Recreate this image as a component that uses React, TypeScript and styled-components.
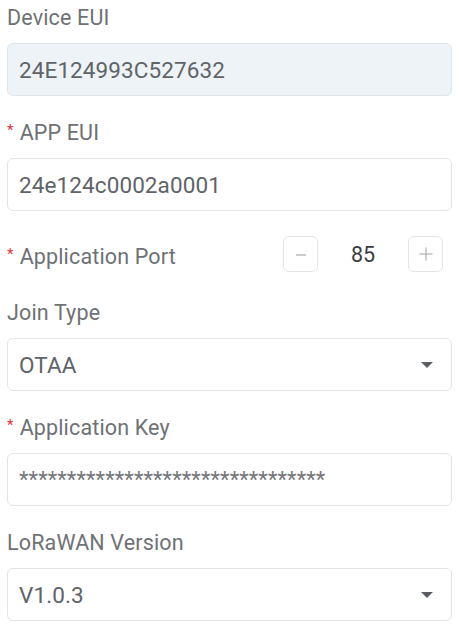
import React from 'react';
import styled, { createGlobalStyle } from 'styled-components';

const GlobalStyle = createGlobalStyle`
  body {
    margin: 0;
    background: #ffffff;
    font-family: Roboto, "Noto Sans", sans-serif;
  }
`;

const Form = styled.div`
  display: flex;
  flex-direction: column;
  gap: 23px;
  padding: 4px 7px 0;
`;

const Field = styled.div`
  display: flex;
  flex-direction: column;
  gap: 11px;
`;

const Label = styled.div<{ $offset?: number }>`
  display: flex;
  align-items: flex-start;
  height: 28px;
  line-height: 28px;
  font-size: 21.5px;
  letter-spacing: 0.15px;
  color: #6e7175;
  margin-top: ${(p) => p.$offset ?? 0}px;
`;

const Required = styled.span`
  color: #e2323a;
  font-size: 15px;
  line-height: 22px;
  margin-right: 6px;
`;

const Box = styled.div<{ $disabled?: boolean }>`
  display: flex;
  align-items: center;
  justify-content: space-between;
  height: 53px;
  box-sizing: border-box;
  padding: 0 18px 0 11px;
  border: 1px solid ${(p) => (p.$disabled ? '#dfe5ea' : '#e2e4e8')};
  border-radius: 6px;
  background: ${(p) => (p.$disabled ? '#eef3f7' : '#ffffff')};
  font-size: 22.5px;
  letter-spacing: 0.1px;
  color: #606367;
`;

const Masked = styled.span`
  font-size: 22px;
  letter-spacing: 0.1px;
  color: #73767a;
`;

const Caret = styled.span`
  width: 0;
  height: 0;
  border-left: 6.5px solid transparent;
  border-right: 6.5px solid transparent;
  border-top: 6px solid #5a5d61;
`;

const Row = styled.div`
  display: flex;
  align-items: flex-start;
  justify-content: space-between;
  padding: 2px 9px 4px 0;
`;

const Stepper = styled.div`
  display: flex;
  align-items: center;
`;

const StepButton = styled.div`
  display: flex;
  align-items: center;
  justify-content: center;
  width: 35px;
  height: 36px;
  box-sizing: border-box;
  border: 1px solid #e3e4e6;
  border-radius: 6px;
  color: #b4b6b9;
`;

const StepValue = styled.div`
  width: 90px;
  text-align: center;
  font-size: 21.5px;
  color: #3a3c3f;
`;

const FormLabel: React.FC<{ required?: boolean; offset?: number; children: React.ReactNode }> = ({
  required,
  offset,
  children,
}) => (
  <Label $offset={offset}>
    {required && <Required>*</Required>}
    <span>{children}</span>
  </Label>
);

const App: React.FC = () => {
  return (
    <>
      <GlobalStyle />
      <Form>
        <Field>
          <FormLabel>Device EUI</FormLabel>
          <Box $disabled>24E124993C527632</Box>
        </Field>
        <Field>
          <FormLabel required>APP EUI</FormLabel>
          <Box>24e124c0002a0001</Box>
        </Field>
        <Row>
          <FormLabel required offset={7}>
            Application Port
          </FormLabel>
          <Stepper>
            <StepButton>
              <svg width="12" height="12" viewBox="0 0 12 12">
                <line x1="1" y1="7" x2="11" y2="7" stroke="currentColor" strokeWidth="1.4" />
              </svg>
            </StepButton>
            <StepValue>85</StepValue>
            <StepButton>
              <svg width="14" height="14" viewBox="0 0 14 14">
                <line x1="0.5" y1="7" x2="13.5" y2="7" stroke="currentColor" strokeWidth="1.3" />
                <line x1="7" y1="0.5" x2="7" y2="13.5" stroke="currentColor" strokeWidth="1.3" />
              </svg>
            </StepButton>
          </Stepper>
        </Row>
        <Field>
          <FormLabel>Join Type</FormLabel>
          <Box>
            OTAA
            <Caret />
          </Box>
        </Field>
        <Field>
          <FormLabel required>Application Key</FormLabel>
          <Box>
            <Masked>********************************</Masked>
          </Box>
        </Field>
        <Field>
          <FormLabel>LoRaWAN Version</FormLabel>
          <Box>
            V1.0.3
            <Caret />
          </Box>
        </Field>
      </Form>
    </>
  );
};

export default App;
